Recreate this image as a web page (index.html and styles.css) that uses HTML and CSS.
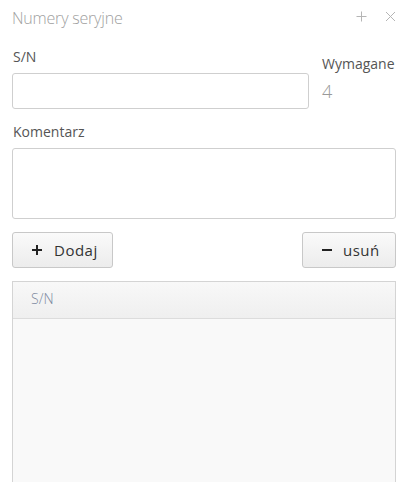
FILE: index.html
```html
<!DOCTYPE html>
<html lang="pl">
<head>
<meta charset="utf-8">
<title>Numery seryjne</title>
<link rel="stylesheet" href="styles.css">
</head>
<body>
<div class="dialog">
  <div class="titlebar">
    <span class="title">Numery seryjne</span>
    <div class="tools">
      <svg class="tool" width="11" height="11" viewBox="0 0 11 11"><path d="M5.5 0.5V10.5M0.5 5.5H10.5" stroke="#b5b5b5" stroke-width="1" fill="none"/></svg>
      <svg class="tool" width="11" height="11" viewBox="0 0 11 11"><path d="M1 1L10 10M10 1L1 10" stroke="#b5b5b5" stroke-width="1" fill="none"/></svg>
    </div>
  </div>
  <div class="content">
    <div class="row">
      <div class="field grow">
        <label class="label">S/N</label>
        <div class="input"></div>
      </div>
      <div class="required">
        <div class="req-label">Wymagane</div>
        <div class="req-value">4</div>
      </div>
    </div>
    <div class="field comment">
      <label class="label">Komentarz</label>
      <div class="textarea"></div>
    </div>
    <div class="buttons">
      <button class="btn add"><svg width="10" height="10" viewBox="0 0 10 10"><path d="M5 0V10M0 5H10" stroke="#222" stroke-width="2"/></svg><span>Dodaj</span></button>
      <button class="btn remove"><svg width="10" height="10" viewBox="0 0 10 10"><path d="M0 5H10" stroke="#222" stroke-width="2"/></svg><span>usuń</span></button>
    </div>
    <div class="table">
      <div class="thead"><span class="th">S/N</span></div>
      <div class="tbody"></div>
    </div>
  </div>
</div>
</body>
</html>
```
FILE: styles.css
```css
html, body {
  margin: 0;
  padding: 0;
  background: #fff;
  font-family: "Open Sans", "Noto Sans", sans-serif;
  overflow: hidden;
}
.dialog {
  width: 405px;
  height: 482px;
  display: flex;
  flex-direction: column;
}
.titlebar {
  display: flex;
  align-items: center;
  justify-content: space-between;
  padding: 7px 9px 0 12px;
  height: 22px;
}
.title {
  font-size: 16px;
  font-weight: 300;
  line-height: 22px;
  color: #a0a0a0;
  letter-spacing: -0.2px;
}
.tools {
  display: flex;
  gap: 18px;
  align-items: center;
  margin-top: -4px;
}
.content {
  padding: 19px 9px 0 12px;
  display: flex;
  flex-direction: column;
  flex: 1;
}
.row {
  display: flex;
  gap: 13px;
}
.grow { flex: 1; }
.field {
  display: flex;
  flex-direction: column;
}
.label {
  font-size: 14px;
  line-height: 18px;
  color: #555;
  margin-bottom: 7px;
  padding-left: 1px;
}
.input {
  height: 34px;
  border: 1px solid #cfcfcf;
  border-radius: 3px;
  background: #fff;
}
.required {
  width: 74px;
  padding-top: 7px;
}
.req-label {
  font-size: 14px;
  line-height: 18px;
  color: #555;
  white-space: nowrap;
}
.req-value {
  margin-top: 6px;
  font-size: 18px;
  font-weight: 300;
  line-height: 24px;
  color: #999;
}
.comment {
  margin-top: 14px;
}
.textarea {
  height: 69px;
  border: 1px solid #cfcfcf;
  border-radius: 3px;
  background: #fff;
}
.buttons {
  display: flex;
  justify-content: space-between;
  margin-top: 13px;
}
.btn {
  height: 36px;
  display: flex;
  align-items: center;
  gap: 12px;
  padding: 0 0 0 19px;
  border: 1px solid #c8c8c8;
  border-radius: 3px;
  background: linear-gradient(#fafafa, #ececec);
  font-family: "Open Sans", "Noto Sans", sans-serif;
  font-size: 15px;
  letter-spacing: 0.5px;
  color: #333;
  box-sizing: border-box;
}
.add { width: 101px; }
.remove { width: 94px; gap: 11px; }
.table {
  margin-top: 13px;
  flex: 1;
  display: flex;
  flex-direction: column;
  border: 1px solid #d4d4d4;
  border-bottom: none;
}
.thead {
  height: 37px;
  box-sizing: border-box;
  display: flex;
  align-items: center;
  padding: 0 0 3px 18px;
  background: linear-gradient(#f8f8f8, #efefef);
  border-bottom: 1px solid #dcdcdc;
}
.th {
  font-weight: 300;
  font-size: 14px;
  line-height: 18px;
  color: #7d8aa0;
}
.tbody {
  flex: 1;
  background: #f9f9f9;
}
```
